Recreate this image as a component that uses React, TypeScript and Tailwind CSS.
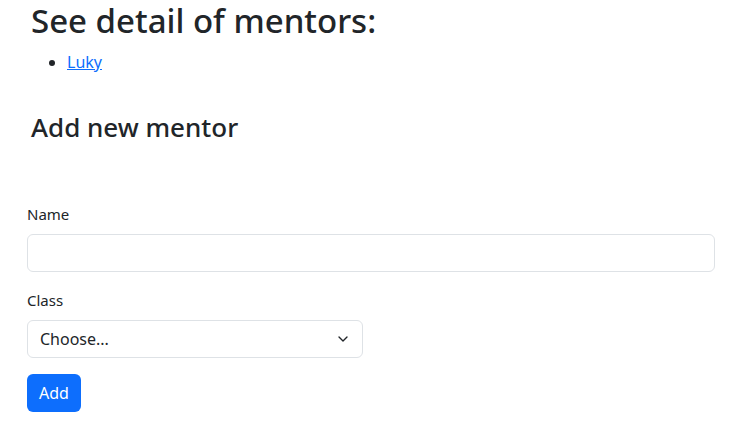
import { ChevronDown } from "lucide-react";

export default function App() {
  return (
    <div
      className="min-h-screen bg-white pt-[1px] text-[#212529]"
      style={{ fontFamily: '"Noto Sans", "Open Sans", sans-serif' }}
    >
      <h1 className="ml-[31px] text-[33px] font-medium leading-[1.2]">
        See detail of mentors:
      </h1>
      <ul className="ml-[35px] mt-[9px] list-disc pl-8 text-base leading-6">
        <li>
          <a href="#" className="text-[#0d6efd] underline">
            Luky
          </a>
        </li>
      </ul>
      <h3 className="ml-[31px] mt-[38px] text-[26px] font-medium leading-[1.2]">
        Add new mentor
      </h3>

      <form
        className="mt-[59px] pl-[27px] pr-[25px]"
        onSubmit={(e) => e.preventDefault()}
      >
        <div className="mb-[16px]">
          <label className="mb-2 block text-[15px] leading-6">Name</label>
          <input
            type="text"
            className="h-[38px] w-full rounded-md border border-[#dee2e6] bg-white px-3 outline-none"
          />
        </div>
        <div className="mb-[16px]">
          <label className="mb-2 block text-[15px] leading-6">Class</label>
          <div className="relative w-[336px]">
            <div className="flex h-[38px] items-center rounded-md border border-[#dee2e6] bg-white pl-3 pr-9 text-base">
              Choose...
            </div>
            <ChevronDown
              className="absolute right-[12px] top-[11px] h-[16px] w-[16px]"
              strokeWidth={2}
            />
          </div>
        </div>
        <button
          type="submit"
          className="h-[38px] rounded-md bg-[#0d6efd] px-3 text-base text-white"
        >
          Add
        </button>
      </form>
    </div>
  );
}
